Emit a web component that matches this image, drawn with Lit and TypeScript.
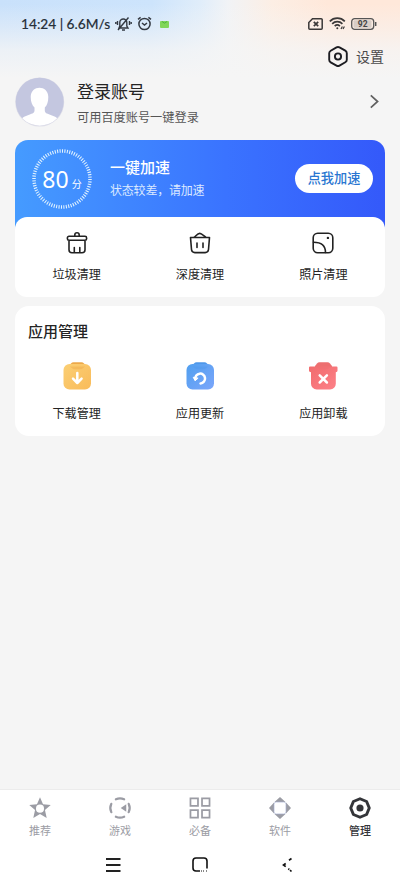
import { LitElement, html, css, svg } from "lit";
import { customElement } from "lit/decorators.js";

const trash = svg`<path d="M9.800 5.300V4a2.200 2.200 0 0 1 4.400 0v1.300M4 5.300h16a1.600 1.600 0 0 1 1.600 1.600v.8a1.600 1.600 0 0 1-1.600 1.600H4a1.600 1.600 0 0 1-1.600-1.600v-.8A1.600 1.600 0 0 1 4 5.300zM4 9.300v9.500a3 3 0 0 0 3 3h10a3 3 0 0 0 3-3V9.300M9.300 21v-4.500M14.800 21v-4.500"/>`;
const basket = svg`<path d="M2.500 6.500h19l-1 12a3.400 3.400 0 0 1-3.400 3.100H6.900a3.400 3.400 0 0 1-3.400-3.100zM6 6.300c1.500-.5 3.200-3.900 5.800-3.900 1.500 0 3.800 2.200 6.200 3.900M9 12v4.500M15 12v4.500"/>`;
const photo = svg`<rect x="2.200" y="2.200" width="19.600" height="19.600" rx="4.500"/><path d="M2.500 11.300C9.500 11.300 14.500 14.500 14.500 21.500"/><circle cx="16.900" cy="6.900" r="1.200" fill="#222" stroke="none"/>`;

const cleaners = [
  { label: "垃圾清理", icon: trash },
  { label: "深度清理", icon: basket },
  { label: "照片清理", icon: photo },
];

const box = svg`<rect x="2.500" y="4" width="27.500" height="25.500" rx="6"/>`;
const bin = svg`<path d="M3 6.500h26.500q1 0 1 1v3.300q0 1.200-1.700 1.400v11.600a5.700 5.700 0 0 1-5.700 5.700H9.700A5.700 5.700 0 0 1 4 23.800V12.200q-2-.2-2-1.400V7.500q0-1 1-1z"/>`;
const arrow = svg`<path d="M16.300 13v9.500M12 18.700l4.300 4.300 4.300-4.300"/>`;
const refresh = svg`<path d="M11.300 19.200a4.900 4.900 0 1 1 5.200 4.200"/><path d="m9.400 17.600 1.700 3.100 2.700-2.300z" fill="#fff" stroke-width="1"/>`;
const cross = svg`<path d="m12.700 15.300 7.200 7.200m0-7.200-7.200 7.200"/>`;
const managers = [
  { label: "下载管理", id: "gold", from: "#fbcf74", to: "#f9bb5a", lid: "#eda94a", body: box, mark: arrow },
  { label: "应用更新", id: "azure", from: "#509fef", to: "#7ba6fb", lid: "#4d97ea", body: box, mark: refresh },
  { label: "应用卸载", id: "coral", from: "#f16c6d", to: "#fd8189", lid: "#ed6f70", body: bin, mark: cross },
];

const tabs = [
  { label: "推荐", icon: svg`<path fill-rule="evenodd" d="m12 .3 3.300 7.700 8.400.8-6.300 5.500 1.900 8.600-7.300-4.400-7.300 4.400 1.900-8.600L.300 8.800l8.400-.8zM12 8.300a4.400 4.400 0 1 0 0 8.800 4.400 4.400 0 0 0 0-8.800z"/>` },
  { label: "游戏", icon: svg`<g fill="none" stroke="currentColor" stroke-width="2.500" stroke-linecap="round"><path d="M7.500 2.500a10.500 10.500 0 0 1 9 0M21.500 7.500a10.500 10.500 0 0 1 0 9M16.500 21.500a10.500 10.500 0 0 1-9 0M2.500 16.500a10.500 10.500 0 0 1 0-9"/></g><path d="m12.800 12 6-4v8z"/>` },
  { label: "必备", icon: svg`<g fill="none" stroke="currentColor" stroke-width="1.900"><path d="M1.600 1.600h8.200v8.200H1.600zM14.200 1.600h8.200v8.200h-8.200zM1.600 14.200h8.200v8.200H1.600zM14.200 14.200h8.200v8.200h-8.200z"/></g>` },
  { label: "软件", icon: svg`<path d="M12 0 18 5.500H6zM24 12l-5.500 6V6zM12 24l-6-5.500h12zM0 12l5.500-6v12z"/><rect x="5.500" y="5.500" width="13" height="13" rx="2.500" fill="#fff" stroke="#a7b0d3" stroke-width=".7"/>` },
  { label: "管理", icon: svg`<path d="m12 1.900 7.200 3 2.900 7.100-2.900 7.100-7.200 3-7.200-3L1.900 12l2.900-7.100z" fill="none" stroke="currentColor" stroke-width="3.200" stroke-linejoin="round"/><circle cx="12" cy="12" r="3.900"/>`, active: true },
];

@customElement("app-root")
export class AppRoot extends LitElement {
  static styles = css`
    :host { display: flex; flex-direction: column; box-sizing: border-box; width: 400px; height: 889px; overflow: hidden; color: #242424;
      font-family: "Noto Sans CJK SC", sans-serif; line-height: 1;
      background: linear-gradient(180deg, rgba(245,245,245,0) 4px, rgba(245,245,245,.4) 28px, rgba(245,245,245,.8) 50px, #f5f5f5 78px), linear-gradient(90deg, #c9e1fb 0, #cde4fc 38%, #e0edfa 50%, #f1f3f6 57%, #fceee4 68%, #ffe8da 82%, #ffe8da 100%); }
    * { box-sizing: border-box; }
    svg { display: block; overflow: visible; flex: none; }
    .status { height: 44px; padding: 3px 23px 0 21px; display: flex; align-items: center; color: #27303a; }
    .status .clock { width: 92px; white-space: nowrap; font: 500 13.7px/20px Lato, sans-serif; -webkit-text-stroke: .15px #27303a; }
    .status .bell { margin-left: 2px; }
    .status .alarm { margin-left: 5px; }
    .status .wifi { margin-left: 6px; }
    .status .battery { margin-left: 5px; }
    .mail { display: flex; width: 9px; height: 7px; margin: 2px 0 0 8px; border-radius: 1px; background: #80d65a; }
    .space { flex: 1; }
    .settings { height: 25px; padding: 0 16px 1px 0; display: flex; justify-content: flex-end; align-items: center; gap: 8px; font-size: 14px; color: #4a4a4a; }
    .account { height: 71px; padding: 8px 20px 0 15px; display: flex; align-items: flex-start; }
    .words { margin: 3px 0 0 12px; flex: 1; }
    .name { font-size: 17px; line-height: 22px; }
    .hint { margin-top: 7px; font-size: 12.200px; line-height: 16px; color: #555; }
    .chevron { margin-top: 17px; }
    .hero { width: 370px; height: 157px; margin-left: 15px; border-radius: 13px; background: linear-gradient(90deg, #459bff 0, #3a73ff 57%, #3459fa 100%) top / 100% 100px no-repeat; }
    .boost { height: 77px; padding: 0 12px 0 17px; display: flex; align-items: center; color: #fff; }
    .score { position: relative; width: 60px; height: 60px; display: flex; justify-content: center; align-items: baseline; gap: 3px; font: 23px/60px "Noto Sans", sans-serif; }
    .score svg { position: absolute; inset: 0; }
    .score small { font: 10px/12px "Noto Sans CJK SC", sans-serif; }
    .message { margin: -2px 0 0 18px; flex: 1; }
    .headline { font-size: 15px; line-height: 20px; font-weight: 500; }
    .sub { margin-top: 4px; font-size: 12px; line-height: 17px; letter-spacing: -.2px; color: #dbe9ff; }
    button { width: 78px; height: 29px; padding: 0 0 1px; border: 0; border-radius: 15px; background: #fff; color: #2976d1; font: 500 13.200px/20px "Noto Sans CJK SC", sans-serif; }
    .cleaning { height: 80px; padding-top: 14px; border-radius: 12px; background: #fff; }
    .row { display: grid; grid-template-columns: repeat(3, 1fr); }
    .item { display: flex; flex-direction: column; align-items: center; font-size: 12.100px; line-height: 18px; }
    .cleaning .item { gap: 10px; }
    .manage { width: 370px; height: 130px; margin: 9px 0 0 15px; padding-top: 14px; border-radius: 14px; background: #fff; }
    .title { padding-left: 13px; font-size: 15px; line-height: 22px; font-weight: 500; }
    .manage .row { margin-top: 18px; }
    .manage .item { gap: 12px; }
    .tabs { height: 51px; margin-top: auto; padding-top: 7px; display: grid; grid-template-columns: repeat(5, 1fr); border-top: 1px solid #ececec; background: #fff; }
    .tab { display: flex; flex-direction: column; align-items: center; gap: 4px; color: #9b9ca4; font-size: 11px; line-height: 15px; }
    .tab.active { color: #343539; font-weight: 500; }
    .system { height: 49px; padding: 0 108px 0 106px; display: flex; align-items: center; background: #fff; }
    .home { margin-left: 71px; }
    .back { margin-left: 75px; }
  `;

  render() {
    return html`
      <div class="status">
        <span class="clock">14:24 | 6.6M/s</span>
        <svg class="bell" width="17" height="16" viewBox="0 0 17 16" fill="none" stroke="#343a43" stroke-width="1.400"><path d="M4 12h9l-1.200-2V6.500a3.500 3.500 0 0 0-7 0V10zM7 14h3M3 14 13.500 1.500M2.500 5v4M.8 6v2M14.500 5v4M16.200 6v2"/></svg>
        <svg class="alarm" width="15" height="15" viewBox="0 0 15 15" fill="none" stroke="#343a43" stroke-width="1.500"><circle cx="7.500" cy="8" r="5.600"/><path d="m5 7 2.500 2L10 7M1 3.300l2.600-2M14 3.300l-2.600-2"/></svg>
        <i class="mail"><svg width="9" height="3" viewBox="0 0 9 3"><path d="m2 .5 2.500 1.700L7 .5" fill="none" stroke="#4fb443" stroke-width="1"/></svg></i><span class="space"></span>
        <svg width="15" height="12" viewBox="0 0 15 12" fill="none" stroke="#3a3838" stroke-width="1.500"><path d="M4.500.8h8.700a1 1 0 0 1 1 1v8.400a1 1 0 0 1-1 1H1.800a1 1 0 0 1-1-1V4.500z"/><path stroke-width="1.700" d="m5.800 3.800 4.400 4.400m0-4.400L5.800 8.200"/></svg>
        <svg class="wifi" width="17" height="13" viewBox="0 0 17 13" fill="none" stroke="#3a3838" stroke-width="1.700"><path d="M.8 4.300a10.500 10.500 0 0 1 15 0M3.200 6.800a7.200 7.200 0 0 1 10.200 0M5.700 9.200a3.800 3.800 0 0 1 5.200 0"/><circle cx="8.300" cy="11.300" r="1" fill="#3a3838" stroke="none"/><path d="m12 12 1.400-2.500m.6 2.500 1.400-2.500" stroke-width="1.200"/></svg>
        <svg class="battery" width="26" height="12" viewBox="0 0 26 12"><rect x=".7" y=".7" width="22" height="10.600" rx="3" fill="none" stroke="#555" stroke-width="1.300"/><rect x="2.500" y="2.300" width="18" height="7.400" rx="1" fill="#d8cdc6"/><path d="M24.700 4v4" stroke="#555" stroke-width="1.500"/><text x="11.700" y="9" text-anchor="middle" font-family="Roboto, sans-serif" font-size="8.500" font-weight="700" fill="#444">92</text></svg>
      </div>
      <div class="settings">
        <svg width="20" height="21" viewBox="0 0 20 21" fill="none" stroke="#1d1d22" stroke-width="1.900"><path d="M8.500 1.400a3 3 0 0 1 3 0l5.800 3.300a3 3 0 0 1 1.500 2.600v6.400a3 3 0 0 1-1.500 2.600l-5.800 3.300a3 3 0 0 1-3 0l-5.800-3.300a3 3 0 0 1-1.500-2.600V7.300a3 3 0 0 1 1.500-2.600z"/><circle cx="10" cy="10.500" r="3.100"/></svg>
        <span>设置</span>
      </div>
      <div class="account">
        <svg width="50" height="50" viewBox="0 0 50 50"><defs><clipPath id="face"><circle cx="24.700" cy="24.700" r="24"/></clipPath></defs><circle cx="24.700" cy="25" r="24.500" fill="#dedee8"/><circle cx="24.700" cy="24.700" r="24" fill="#c4c7e0"/><path clip-path="url(#face)" fill="#fff" d="M15.700 20c0-12.500 17.600-12.500 17.600 0 0 5-1.200 8.300-3.500 10.500v3.200c0 4.800 12.500 3.200 15 11.300v5H5v-5c2-8.100 14.500-6.500 14.500-11.300v-3.200C17.200 28.300 15.700 25 15.700 20z"/></svg>
        <div class="words"><div class="name">登录账号</div><div class="hint">可用百度账号一键登录</div></div>
        <svg class="chevron" width="10" height="15" viewBox="0 0 10 15" fill="none" stroke="#606060" stroke-width="1.700"><path d="m.8 1.300 6.800 6.200-6.800 6.200"/></svg>
      </div>
      <div class="hero">
        <div class="boost">
          <div class="score"><svg width="60" height="60" viewBox="0 0 60 60"><circle cx="30" cy="30" r="28" fill="none" stroke="#e4f4ff" stroke-width="3.500" pathLength="72" stroke-dasharray=".43 .57"/></svg><span>80</span><small>分</small></div>
          <div class="message"><div class="headline">一键加速</div><div class="sub">状态较差，请加速</div></div>
          <button>点我加速</button>
        </div>
        <div class="cleaning"><div class="row">${cleaners.map(i => html`<div class="item"><svg width="24" height="24" viewBox="0 0 24 24" fill="none" stroke="#222" stroke-width="1.600" stroke-linecap="round" stroke-linejoin="round">${i.icon}</svg><span>${i.label}</span></div>`)}</div></div>
      </div>
      <div class="manage">
        <div class="title">应用管理</div>
        <div class="row">${managers.map(i => html`<div class="item"><svg width="32" height="32" viewBox="0 0 32 32"><defs><linearGradient id=${i.id} x2="1" y2="1"><stop stop-color=${i.from}/><stop offset="1" stop-color=${i.to}/></linearGradient></defs><path d="M8 7.500V6l2-2.500q1-1.200 2.500-1.200h8q1.500 0 2.500 1.200L25 6v1.500z" fill=${i.lid}/><g fill="url(#${i.id})">${i.body}</g><path d="M9 6.500h15l-2 1.800q-1 .9-2.500.9h-6q-1.500 0-2.500-.9z" fill=${i.lid} opacity=".45"/><g fill="none" stroke="#fff" stroke-width="2.500" stroke-linecap="round" stroke-linejoin="round">${i.mark}</g></svg><span>${i.label}</span></div>`)}</div>
      </div>
      <div class="tabs">${tabs.map(t => html`<div class="tab ${t.active ? "active" : ""}"><svg width="22" height="22" viewBox="0 0 24 24" fill="currentColor">${t.icon}</svg><span>${t.label}</span></div>`)}</div>
      <div class="system">
        <svg width="15" height="14" viewBox="0 0 15 14" stroke="#222" stroke-width="1.800"><path d="M0 1h14.500M0 7h14.500M0 13h14.500"/></svg>
        <svg class="home" width="16" height="15" viewBox="0 0 16 15" fill="none" stroke="#111" stroke-width="1.600"><path d="M8 14H4a3 3 0 0 1-3-3V4a3 3 0 0 1 3-3h8a3 3 0 0 1 3 3v7.500"/><path d="M9 14h3m2 0h1" stroke-width="1" stroke-dasharray="1 1"/></svg>
        <svg class="back" width="11" height="14" viewBox="0 0 11 14" fill="none" stroke="#111" stroke-width="1.700"><path d="M8.500.500 6 2.200M2.700 5.500.500 7l2.200 1.700M5.300 10.800l1 .7M7 12.100l1.500 1.400"/></svg>
      </div>`;
  }
}
